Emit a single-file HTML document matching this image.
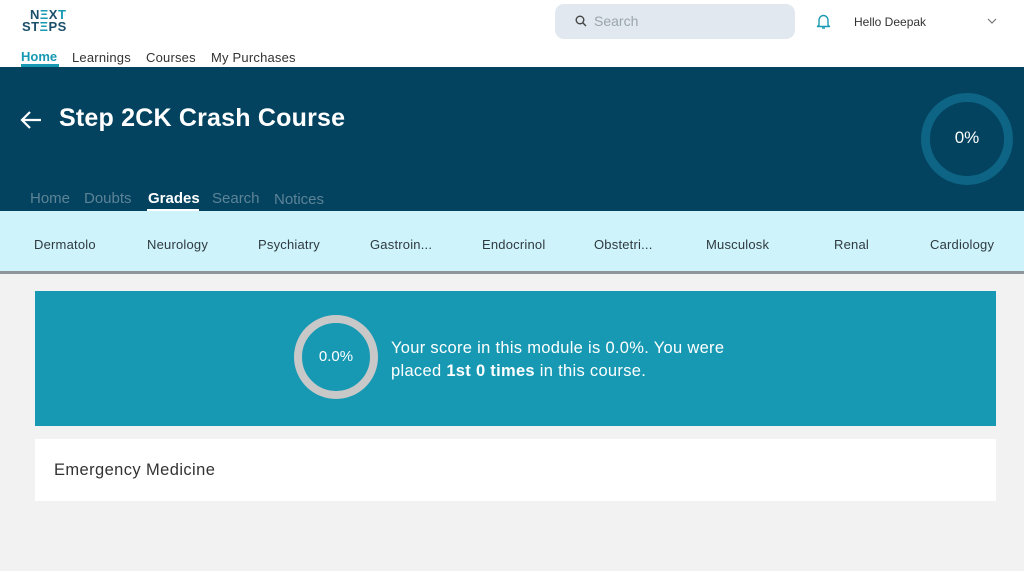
<!DOCTYPE html>
<html><head><style>
*{margin:0;padding:0;box-sizing:border-box}
body{width:1024px;height:571px;background:#f2f2f2;font-family:"Liberation Sans",sans-serif;position:relative;overflow:hidden}
.top{position:absolute;left:0;top:0;width:1024px;height:67px;background:#fff}
.abs{position:absolute;white-space:nowrap}
.hero{position:absolute;left:0;top:67px;width:1024px;height:144px;background:#03435f}
.tabs{position:absolute;left:0;top:211px;width:1024px;height:63px;background:#cef3fb;border-bottom:3px solid #8e9699}
.tabs span{position:absolute;top:26px;font-size:13px;color:#2f3a40;letter-spacing:0.2px}
</style></head><body>
<div class="top">
  <div class="abs" style="left:30px;top:9px;font-size:13px;font-weight:bold;color:#1a4f6b;line-height:12px;letter-spacing:0.5px">N<span style="color:#1799b3">Ξ</span>X<span style="color:#1799b3">T</span><br><span style="margin-left:-8px">ST<span style="color:#1799b3">Ξ</span>PS</span></div>
  <div class="abs" style="left:21px;top:49px;font-size:13px;font-weight:bold;color:#1799b3">Home</div>
  <div class="abs" style="left:21px;top:64px;width:38px;height:3px;background:#1799b3"></div>
  <div class="abs" style="left:72px;top:50px;font-size:13px;color:#333;letter-spacing:0.2px">Learnings</div>
  <div class="abs" style="left:146px;top:50px;font-size:13px;color:#333;letter-spacing:0.2px">Courses</div>
  <div class="abs" style="left:211px;top:50px;font-size:13px;color:#333;letter-spacing:0.2px">My Purchases</div>
  <div class="abs" style="left:555px;top:4px;width:240px;height:35px;border-radius:9px;background:#e1e8ef"></div>
  <svg class="abs" style="left:575px;top:15px" width="12" height="12" viewBox="0 0 12 12"><circle cx="5" cy="5" r="3.8" fill="none" stroke="#444" stroke-width="1.4"/><path d="M8 8l3 3" stroke="#444" stroke-width="1.4"/></svg>
  <div class="abs" style="left:594px;top:13px;font-size:14px;color:#9aa5ad">Search</div>
  <svg class="abs" style="left:816px;top:13px" width="15" height="17" viewBox="0 0 15 17"><path d="M3 12V7a4.5 4.5 0 0 1 9 0v5l1.5 1.5h-12z" fill="none" stroke="#1799b3" stroke-width="1.4" stroke-linejoin="round"/><path d="M6 15h3" stroke="#1799b3" stroke-width="1.4"/></svg>
  <div class="abs" style="left:854px;top:15px;font-size:12px;color:#333">Hello Deepak</div>
  <svg class="abs" style="left:987px;top:18px" width="10" height="6" viewBox="0 0 10 6"><path d="M1 1l4 4 4-4" fill="none" stroke="#777" stroke-width="1.2"/></svg>
</div>
<div class="hero">
  <svg class="abs" style="left:20px;top:43px" width="22" height="20" viewBox="0 0 22 20"><path d="M21 10H2M10 2L2 10l8 8" fill="none" stroke="#fff" stroke-width="2.2"/></svg>
  <div class="abs" style="left:59px;top:37px;font-size:25px;font-weight:bold;color:#fff;letter-spacing:0.2px">Step 2CK Crash Course</div>
  <div class="abs" style="left:30px;top:123px;font-size:15px;color:#5d8397">Home</div>
  <div class="abs" style="left:84px;top:123px;font-size:15px;color:#5d8397">Doubts</div>
  <div class="abs" style="left:148px;top:123px;font-size:15px;font-weight:bold;color:#fff">Grades</div>
  <div class="abs" style="left:147px;top:142px;width:52px;height:2px;background:#fff"></div>
  <div class="abs" style="left:212px;top:123px;font-size:15px;color:#5d8397">Search</div>
  <div class="abs" style="left:274px;top:124px;font-size:15px;color:#5d8397">Notices</div>
  <div class="abs" style="left:921px;top:26px;width:92px;height:92px;border-radius:50%;border:9px solid #0d6484"></div>
  <div class="abs" style="left:921px;top:61px;width:92px;text-align:center;font-size:17px;color:#fff">0%</div>
</div>
<div class="tabs">
  <span style="left:34px">Dermatolo</span>
  <span style="left:147px">Neurology</span>
  <span style="left:258px">Psychiatry</span>
  <span style="left:370px">Gastroin...</span>
  <span style="left:482px">Endocrinol</span>
  <span style="left:594px">Obstetri...</span>
  <span style="left:706px">Musculosk</span>
  <span style="left:834px">Renal</span>
  <span style="left:930px">Cardiology</span>
</div>
<div class="abs" style="left:35px;top:291px;width:961px;height:135px;background:#1799b3"></div>
<div class="abs" style="left:294px;top:315px;width:84px;height:84px;border-radius:50%;border:8px solid #c8c8c8"></div>
<div class="abs" style="left:294px;top:348px;width:84px;text-align:center;font-size:15px;color:#fff">0.0%</div>
<div class="abs" style="left:391px;top:337px;font-size:16.5px;line-height:23px;color:#fff;letter-spacing:0.3px">Your score in this module is 0.0%. You were<br>placed <b>1st 0 times</b> in this course.</div>
<div class="abs" style="left:35px;top:439px;width:961px;height:62px;background:#fff"></div>
<div class="abs" style="left:54px;top:461px;font-size:16.5px;color:#333;letter-spacing:0.4px">Emergency Medicine</div>
</body></html>
